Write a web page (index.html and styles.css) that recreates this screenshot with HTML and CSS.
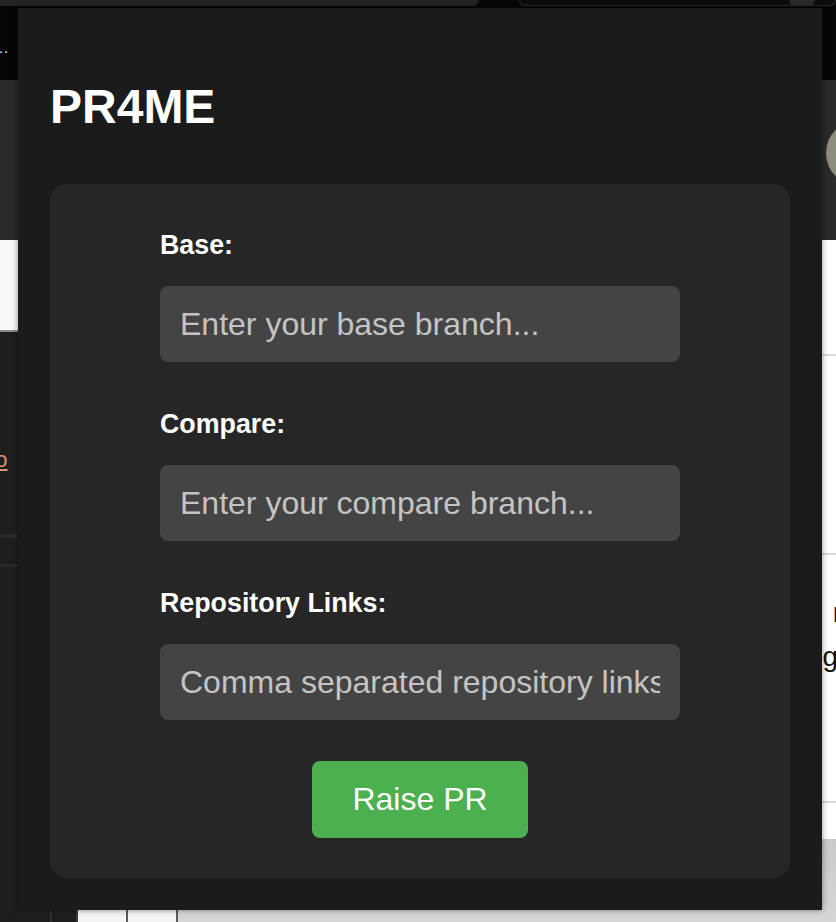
FILE: index.html
```html
<!DOCTYPE html>
<html lang="en">
<head>
<meta charset="utf-8">
<title>PR4ME</title>
<link rel="stylesheet" href="styles.css">
</head>
<body>
<div class="backdrop">
  <div class="tabstrip">
    <div class="tab-left"></div>
    <div class="tab-right"><span class="tab-dot"></span></div>
  </div>
  <div class="toolbar"><span class="dots">..</span></div>
  <div class="header"><span class="avatar"></span></div>
  <div class="page">
    <div class="sidebar">
      <div class="sb-white"></div>
      <div class="sb-link"><span>Repo</span></div>
      <div class="sb-rule"></div>
      <div class="sb-rule sb-rule-2"></div>
      <div class="sb-bottom"><span class="sb-bottom-a"></span><span class="sb-bottom-b"></span></div>
    </div>
    <div class="content">
      <div class="row row-1"></div>
      <div class="row row-2"></div>
      <div class="row row-3"><span class="peek">r</span><span class="peek">g</span></div>
      <div class="row-gap"></div>
      <div class="grey-zone">
        <div class="grey-cells"><span class="cell"></span><span class="cell"></span></div>
      </div>
    </div>
  </div>
</div>

<div class="popup">
  <h1 class="title">PR4ME</h1>
  <div class="card">
    <form class="form">
      <div class="field">
        <label class="label" for="base">Base:</label>
        <input class="input" id="base" type="text" placeholder="Enter your base branch...">
      </div>
      <div class="field">
        <label class="label" for="compare">Compare:</label>
        <input class="input" id="compare" type="text" placeholder="Enter your compare branch...">
      </div>
      <div class="field field-last">
        <label class="label" for="repos">Repository Links:</label>
        <input class="input" id="repos" type="text" placeholder="Comma separated repository links">
      </div>
      <button class="button" type="button">Raise PR</button>
    </form>
  </div>
</div>
</body>
</html>
```

FILE: styles.css
```css
html, body {
  margin: 0;
  padding: 0;
}

body {
  width: 836px;
  height: 922px;
  overflow: hidden;
  position: relative;
  background: #050505;
  font-family: "Liberation Sans", Arial, Helvetica, sans-serif;
}

/* ---------- background browser page ---------- */
.backdrop {
  display: flex;
  flex-direction: column;
  width: 836px;
  height: 922px;
}

.tabstrip {
  height: 8px;
  display: flex;
  background: #060606;
  box-sizing: border-box;
  padding-bottom: 2px;
}

.tab-left {
  width: 486px;
  background: #242424;
  border-bottom-right-radius: 10px;
}

.tab-right {
  margin-left: 40px;
  width: 300px;
  border: 1px solid #2c2c2c;
  border-top: none;
  border-radius: 0 0 12px 12px;
  background: #0c0c0c;
  display: flex;
  justify-content: flex-end;
  padding-right: 20px;
}

.tab-dot {
  width: 26px;
  height: 6px;
  border-radius: 0 0 13px 13px;
  background: #2a2a2a;
}

.toolbar {
  height: 72px;
  background: #050505;
  color: #fff;
  font-size: 14px;
  line-height: 14px;
}

.dots {
  display: block;
  padding-top: 33px;
  margin-left: -1px;
  letter-spacing: 1px;
}

.header {
  height: 160px;
  background: #2a2a2a;
  display: flex;
  justify-content: flex-end;
  align-items: center;
}

.avatar {
  width: 66px;
  height: 66px;
  border-radius: 50%;
  background: #8e8c7c;
  margin-right: -56px;
  margin-top: -14px;
}

.page {
  flex: 1;
  display: grid;
  grid-template-columns: 78px 1fr;
}

.sidebar {
  background: #1e1e1e;
  display: flex;
  flex-direction: column;
  border-right: 2px solid #3a3a3a;
}

.sb-white {
  height: 90px;
  background: #f8f8f8;
  border-bottom: 2px solid #8a8a8a;
}

.sb-link {
  margin-top: 116px;
  height: 24px;
  font-size: 22px;
  line-height: 24px;
  color: #d9906f;
  text-indent: -45px;
  white-space: nowrap;
}

.sb-link span {
  text-decoration: underline;
}

.sb-rule {
  margin-top: 62px;
  height: 4px;
  background: #2a2a2a;
}

.sb-rule-2 {
  margin-top: 26px;
  height: 3px;
}

.sb-bottom {
  margin-top: auto;
  height: 12px;
  display: flex;
}

.sb-bottom-a {
  width: 50px;
  border-right: 2px solid #303030;
}

.content {
  background: #ffffff;
  display: flex;
  flex-direction: column;
}

.row {
  border-bottom: 2px solid #d8d8d8;
}

.row-1 {
  height: 114px;
}

.row-2 {
  height: 197px;
}

.row-3 {
  height: 248px;
  display: flex;
  flex-direction: column;
  align-items: flex-end;
  padding-top: 36px;
  box-sizing: border-box;
  font-size: 28px;
  line-height: 44px;
  color: #111;
}

.row-gap {
  height: 36px;
  background: #ffffff;
}

.peek:first-child {
  margin-right: -6px;
}

.peek:last-child {
  margin-right: -2px;
}

.grey-zone {
  flex: 1;
  background: linear-gradient(#c9c9c9, #d6d6d6);
  display: flex;
  flex-direction: column;
  justify-content: flex-end;
}

.grey-cells {
  display: flex;
  height: 12px;
}

.cell {
  width: 48px;
  background: #f4f4f4;
  border-right: 2px solid #5a5a5a;
}

/* ---------- popup ---------- */
.popup {
  position: absolute;
  left: 18px;
  top: 8px;
  width: 804px;
  height: 902px;
  box-sizing: border-box;
  padding: 0 32px;
  background: #1b1b1b;
  box-shadow: 0 0 6px rgba(0, 0, 0, 0.45);
}

.title {
  margin: 75px 0 53px;
  font-size: 48px;
  line-height: 48px;
  font-weight: 700;
  color: #ffffff;
}

.card {
  background: #262626;
  border-radius: 16px;
  padding: 45px 0 40px;
}

.form {
  width: 520px;
  margin: 0 auto;
  display: flex;
  flex-direction: column;
}

.field {
  display: flex;
  flex-direction: column;
  margin-bottom: 46px;
}

.field-last {
  margin-bottom: 41px;
}

.label {
  font-size: 26.8px;
  line-height: 32px;
  font-weight: 700;
  color: #ffffff;
  margin-bottom: 25px;
}

.input {
  height: 76px;
  box-sizing: border-box;
  border: none;
  border-radius: 8px;
  background: #444444;
  padding: 0 20px 0 20px;
  font-family: "Liberation Sans", Arial, Helvetica, sans-serif;
  font-size: 32px;
  color: #ffffff;
  outline: none;
}

.input::placeholder {
  color: #c4c4c4;
  opacity: 1;
}

.button {
  align-self: center;
  height: 77px;
  width: 216px;
  border: none;
  border-radius: 8px;
  background: #4caf50;
  color: #ffffff;
  font-family: "Liberation Sans", Arial, Helvetica, sans-serif;
  font-size: 32px;
  cursor: pointer;
}
```
